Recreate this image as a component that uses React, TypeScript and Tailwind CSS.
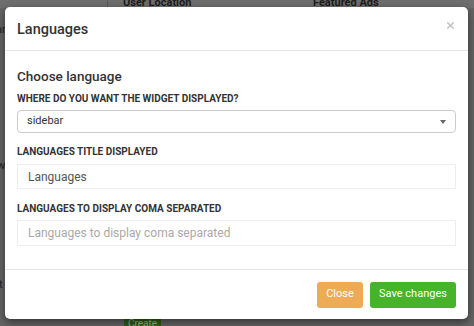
import { X } from "lucide-react";

const font = { fontFamily: "Roboto, 'Liberation Sans', sans-serif" };

function Label({ children, className = "" }: { children: string; className?: string }) {
  return (
    <div className={`h-[14px] text-[10px] font-bold uppercase leading-[14px] text-[#333] ${className}`}>
      {children}
    </div>
  );
}

export default function App() {
  return (
    <div className="relative h-[326px] w-[474px] overflow-hidden bg-[#646464]" style={font}>
      {/* dimmed page behind the modal */}
      <div className="flex h-[8px] items-end bg-[#6e6e6e] text-[11px] font-bold leading-[10px] text-[#1c1c1c]">
        <div className="h-full w-[108px] border-r border-[#5a5a5a]" />
        <div className="w-[200px] pl-[15px]">User Location</div>
        <div className="pl-[5px]">Featured Ads</div>
      </div>
      <div className="absolute left-[-4px] top-[22px] text-[11px] text-[#222]">ar</div>
      <div className="absolute left-[-3px] top-[158px] text-[11px] text-[#222]">w</div>
      <div className="absolute left-[-1px] top-[277px] text-[11px] text-[#222]">t</div>
      <div className="absolute left-[124px] top-[318px] rounded-[2px] bg-[#2b5e14] px-[4px] text-[10px] leading-[12px] text-[#9ab88c]">
        Create
      </div>

      {/* modal */}
      <div className="absolute left-[5px] top-[7px] flex h-[312px] w-[463px] flex-col rounded-[5px] bg-white shadow-[0_3px_9px_rgba(0,0,0,0.5)]">
        <div className="flex h-[44px] shrink-0 items-center justify-between border-b border-[#e5e5e5] pl-[12px] pr-[12px]">
          <h4 className="pt-[2px] text-[14.5px] font-medium text-[#333]">Languages</h4>
          <X size={11} strokeWidth={3.5} className="mb-[6px] text-[#c4c4c4]" />
        </div>

        <div className="flex-1 px-[12px]">
          <div className="mt-[15px] h-[20px] text-[13.5px] font-medium leading-[20px] text-[#333]">Choose language</div>
          <Label className="mt-[6px]">Where do you want the widget displayed?</Label>
          <div className="mt-[4px] flex h-[23px] items-center justify-between rounded-[4px] border border-[#cccccc] pl-[9px] pr-[9px] text-[11px] text-[#333]">
            <span>sidebar</span>
            <svg width="6" height="4" viewBox="0 0 6 4">
              <path d="M0 0h6L3 4z" fill="#666" />
            </svg>
          </div>
          <Label className="mt-[12px]">Languages title displayed</Label>
          <div className="mt-[5px] flex h-[25px] items-center border border-[#eeeeee] pl-[10px] text-[12px] text-[#555]">
            Languages
          </div>
          <Label className="mt-[13px]">Languages to display coma separated</Label>
          <div className="mt-[4px] flex h-[26px] items-center border border-[#eeeeee] pl-[10px] text-[12px] text-[#a9a9a9]">
            Languages to display coma separated
          </div>
        </div>

        <div className="flex h-[50px] shrink-0 items-center justify-end gap-[7px] border-t border-[#e5e5e5] pr-[12px]">
          <button className="h-[26px] w-[46px] rounded-[3px] bg-[#eeab55] text-[11px] text-white">Close</button>
          <button className="h-[26px] w-[86px] rounded-[3px] bg-[#46b32a] text-[11px] text-white">Save changes</button>
        </div>
      </div>
    </div>
  );
}
